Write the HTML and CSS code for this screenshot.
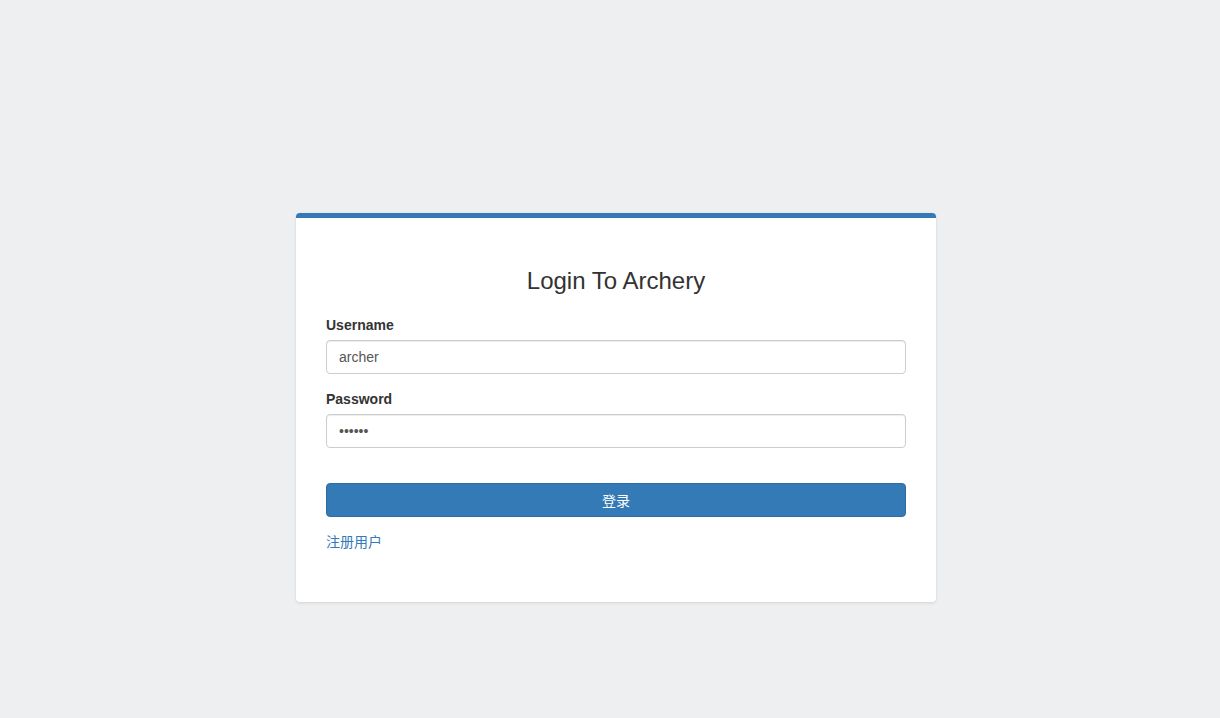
FILE: index.html
```html
<!DOCTYPE html>
<html lang="zh-CN">
<head>
  <meta charset="UTF-8">
  <title>Login To Archery</title>
  <meta name="viewport" content="width=device-width, initial-scale=1.0">
  <link rel="stylesheet" href="styles.css">
</head>
<body>

  <div class="login-box">
    <h3 class="login-title">Login To Archery</h3>
    <form class="login-form" onsubmit="return false;">
      <div class="form-group">
        <label for="username">Username</label>
        <input type="text" id="username" class="form-control" value="archer">
      </div>
      <div class="form-group">
        <label for="password">Password</label>
        <input type="password" id="password" class="form-control" value="123456">
      </div>
      <button type="submit" class="btn-login">登录</button>
    </form>
    <a href="#" class="register-link">注册用户</a>
  </div>

</body>
</html>
```

FILE: styles.css
```css
* {
  box-sizing: border-box;
}

body {
  margin: 0;
  font-family: "Liberation Sans", Arial, "Noto Sans CJK SC", sans-serif;
  font-size: 14px;
  line-height: 20px;
  color: #333;
  background-color: #eeeff1;
  height: 100vh;
  display: flex;
  justify-content: center;
  padding: 213px 0 0 12px;
}

.login-box {
  width: 640px;
  height: 389px;
  background: #fff;
  border-top: 5px solid #337ab7;
  border-radius: 4px;
  box-shadow: 0 1px 3px rgba(0, 0, 0, 0.12);
  padding: 50px 30px 0;
}

.login-title {
  margin: 0 0 21px;
  font-size: 24px;
  font-weight: normal;
  line-height: 26px;
  text-align: center;
  color: #333;
}

.form-group {
  margin-bottom: 15px;
}

.form-group label {
  display: block;
  font-weight: bold;
  margin-bottom: 5px;
}

.form-control {
  display: block;
  width: 100%;
  height: 34px;
  padding: 6px 12px;
  font-family: inherit;
  font-size: 14px;
  color: #555;
  background: #fff;
  border: 1px solid #ccc;
  border-radius: 4px;
  box-shadow: inset 0 1px 1px rgba(0, 0, 0, 0.075);
  outline: none;
}

.btn-login {
  display: block;
  width: 100%;
  height: 34px;
  margin-top: 35px;
  font-family: inherit;
  font-size: 14px;
  color: #fff;
  background-color: #337ab7;
  border: 1px solid #2e6da4;
  border-radius: 4px;
  cursor: pointer;
}

.register-link {
  display: inline-block;
  margin-top: 15px;
  color: #337ab7;
  text-decoration: none;
}
```
